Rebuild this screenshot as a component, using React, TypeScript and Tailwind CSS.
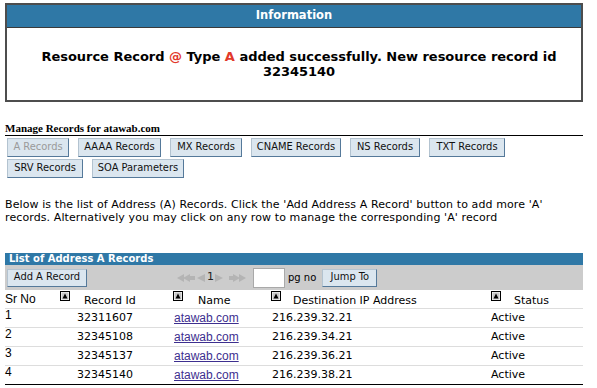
import React from 'react';

const records = [
  { sr: 1, id: '32311607', name: 'atawab.com', ip: '216.239.32.21', status: 'Active' },
  { sr: 2, id: '32345108', name: 'atawab.com', ip: '216.239.34.21', status: 'Active' },
  { sr: 3, id: '32345137', name: 'atawab.com', ip: '216.239.36.21', status: 'Active' },
  { sr: 4, id: '32345140', name: 'atawab.com', ip: '216.239.38.21', status: 'Active' },
];

const tabs = [
  { label: 'A Records', w: 'w-[62px]', off: true },
  { label: 'AAAA Records', w: 'w-[83px]' },
  { label: 'MX Records', w: 'w-[72px]' },
  { label: 'CNAME Records', w: 'w-[90px]' },
  { label: 'NS Records', w: 'w-[70px]' },
  { label: 'TXT Records', w: 'w-[76px]' },
];

const SortIcon = () => (
  <svg width="10" height="10" viewBox="0 0 10 10" className="shrink-0">
    <rect x="0.5" y="0.5" width="9" height="9" fill="#fff" stroke="#000" />
    <rect x="1.5" y="1.5" width="7" height="7" fill="#c8c8c8" />
    <path d="M5 2.5 L7.5 7.5 L2.5 7.5 Z" fill="#000" />
  </svg>
);

const Btn: React.FC<{ label: string; w: string; off?: boolean; h?: string }> = ({ label, w, off, h }) => (
  <div
    className={`${w} ${h ?? 'h-[19px]'} flex items-center justify-center bg-[#dbe6ef] border border-t-[#b3c3d0] border-l-[#b3c3d0] border-b-[#55799a] border-r-[#55799a] text-[11px] font-['DejaVu_Sans_Condensed','DejaVu_Sans',sans-serif] whitespace-nowrap ${
      off ? 'text-[#9a9a9a]' : 'text-[#111]'
    }`}
  >
    {label}
  </div>
);

export default function App() {
  return (
    <div className="w-[597px] h-[388px] bg-white overflow-hidden font-['DejaVu_Sans',sans-serif] text-black">
      <div className="pt-[3px] pl-[5px] w-[583px]">
        {/* Information box */}
        <div className="w-[578px] border-2 border-[#4d4d4d]">
          <div className="h-[23px] bg-[#2f78a6] border-b border-[#3a3a3a] flex items-center justify-center text-white font-bold text-[11.5px]">
            Information
          </div>
          <div className="h-[72px] flex items-center justify-center text-center font-bold text-[13px] leading-[15px] tracking-[-0.02px] pl-[14px] pr-[4px]">
            <p>
              Resource Record <span className="text-[#e2392b]">@</span> Type{' '}
              <span className="text-[#e2392b]">A</span> added successfully. New resource record id 32345140
            </p>
          </div>
        </div>

        {/* Manage records */}
        <div className="mt-[20px] h-[14px] leading-[13px] border-b border-black font-['Liberation_Serif',serif] font-bold text-[11px]">
          Manage Records for atawab.com
        </div>
        <div className="mt-[2px] ml-[2px] flex gap-[9px]">
          {tabs.map((t) => (
            <Btn key={t.label} label={t.label} w={t.w} off={t.off} />
          ))}
        </div>
        <div className="mt-[2px] ml-[2px] flex gap-[9px]">
          <Btn label="SRV Records" w="w-[76px]" />
          <Btn label="SOA Parameters" w="w-[92px]" />
        </div>

        <p className="mt-[20px] w-[560px] text-[11px] leading-[13px] tracking-[0.1px]">
          Below is the list of Address (A) Records. Click the 'Add Address A Record' button to add more 'A'
          records. Alternatively you may click on any row to manage the corresponding 'A' record
        </p>

        {/* List */}
        <div className="mt-[29px]">
          <div className="h-[12px] bg-[#2f78a6] text-white font-bold text-[10px] leading-[12px] pl-[4px]">
            List of Address A Records
          </div>
          <div className="h-[25px] bg-[#cccccc] flex items-center">
            <div className="ml-[2px]">
              <Btn label="Add A Record" w="w-[80px]" h="h-[18px]" />
            </div>
            <div className="ml-[90px] flex items-center text-[#b4b4b4]">
              <svg width="18" height="10" viewBox="0 0 18 10">
                <path d="M0 5 L7 1 L7 9 Z M6 5 L13 1 L13 9 Z" fill="currentColor" />
                <rect x="13" y="3" width="5" height="4" fill="currentColor" />
              </svg>
              <svg width="8" height="10" viewBox="0 0 8 10" className="ml-[2px]">
                <path d="M0 5 L8 1 L8 9 Z" fill="currentColor" />
              </svg>
              <span className="ml-[2px] w-[7px] text-center text-[11px] text-[#222]">1</span>
              <svg width="8" height="10" viewBox="0 0 8 10" className="ml-[1px]">
                <path d="M8 5 L0 1 L0 9 Z" fill="currentColor" />
              </svg>
              <svg width="18" height="10" viewBox="0 0 18 10" className="ml-[6px]">
                <rect x="0" y="3" width="5" height="4" fill="currentColor" />
                <path d="M4 1 L11 5 L4 9 Z M10 1 L17 5 L10 9 Z" fill="currentColor" />
              </svg>
            </div>
            <div className="ml-[6px] w-[32px] h-[20px] bg-white border border-[#a9a9a9]" />
            <span className="ml-[3px] text-[10px]">pg no</span>
            <div className="ml-[6px]">
              <Btn label="Jump To" w="w-[55px]" h="h-[18px]" />
            </div>
          </div>

          {/* header */}
          <div className="grid grid-cols-[55px_113px_98px_220px_1fr] h-[19px] border-b border-[#dddddd] text-[11px]">
            <div className="font-['Liberation_Sans',sans-serif] text-[12px] leading-[18px]">Sr No</div>
            <div className="flex items-start pt-[1px]">
              <SortIcon />
              <span className="ml-[14px] leading-[16px] mt-[2px]">Record Id</span>
            </div>
            <div className="flex items-start pt-[1px]">
              <SortIcon />
              <span className="ml-[15px] leading-[16px] mt-[2px]">Name</span>
            </div>
            <div className="flex items-start pt-[1px]">
              <SortIcon />
              <span className="ml-[12px] leading-[16px] mt-[2px]">Destination IP Address</span>
            </div>
            <div className="flex items-start pt-[1px]">
              <SortIcon />
              <span className="ml-[13px] leading-[16px] mt-[2px]">Status</span>
            </div>
          </div>

          {records.map((r, i) => (
            <div
              key={r.id}
              className={`grid grid-cols-[55px_113px_98px_220px_1fr] h-[19px] text-[11px] items-center border-b ${
                i === records.length - 1 ? 'border-black' : 'border-[#dddddd]'
              }`}
            >
              <div className="font-['Liberation_Sans',sans-serif] text-[12px] leading-[13px] self-start">{r.sr}</div>
              <div className="pl-[17px]">{r.id}</div>
              <div className="pl-[1px]">
                <a className="font-['Liberation_Sans',sans-serif] text-[12px] text-[#3d2f8f] underline">{r.name}</a>
              </div>
              <div className="pl-[1px]">{r.ip}</div>
              <div>{r.status}</div>
            </div>
          ))}
        </div>
      </div>
    </div>
  );
}
